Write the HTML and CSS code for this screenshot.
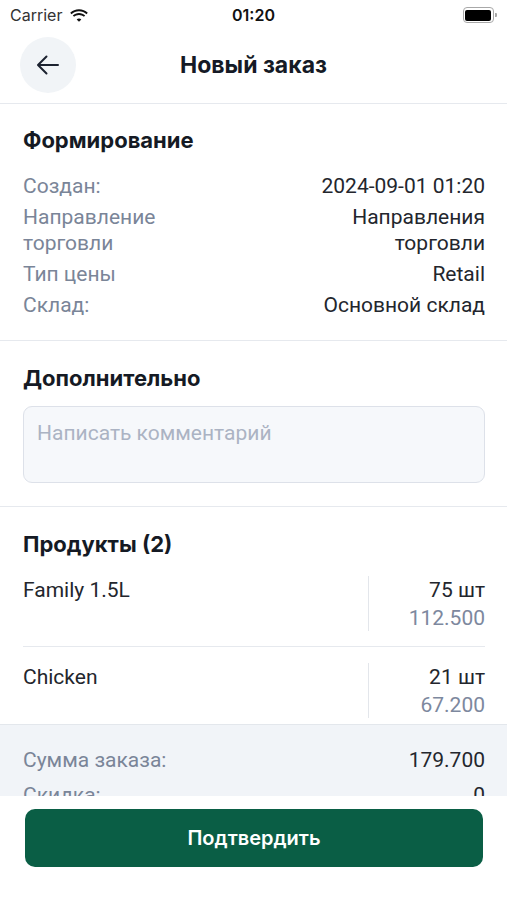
FILE: index.html
```html
<!DOCTYPE html>
<html>
<head>
    <meta charset="UTF-8">
    <meta name="viewport" content="width=device-width, initial-scale=1.0">
    <title>Новый заказ</title>
    <link rel="stylesheet" href="styles.css">
</head>
<body>
    <div class="screen">
        <!-- Status bar -->
        <div class="status-bar">
            <div class="status-left">
                <span>Carrier</span>
                <svg class="wifi" width="18" height="13" viewBox="0 0 18 13">
                    <path d="M9 2.2c2.9 0 5.5 1.1 7.5 3l1.3-1.4C15.5 1.6 12.4.3 9 .3S2.5 1.6.2 3.8l1.3 1.4c2-1.9 4.6-3 7.5-3z" fill="#111"/>
                    <path d="M9 5.9c1.9 0 3.6.7 4.9 1.9l1.3-1.4C13.6 4.9 11.4 4 9 4s-4.6.9-6.2 2.4l1.3 1.4C5.4 6.6 7.1 5.9 9 5.9z" fill="#111"/>
                    <path d="M9 9.5c.9 0 1.7.3 2.3.9L9 12.8 6.7 10.4c.6-.6 1.4-.9 2.3-.9z" fill="#111"/>
                </svg>
            </div>
            <div class="status-time">01:20</div>
            <div class="status-right">
                <div class="battery"><div class="battery-level"></div></div>
                <div class="battery-cap"></div>
            </div>
        </div>

        <!-- Header -->
        <div class="header">
            <button class="back-btn" aria-label="Назад">
                <svg width="26" height="26" viewBox="0 0 26 26">
                    <path d="M23 13H3.5M11.5 4.5L3 13l8.5 8.5" fill="none" stroke="#1c2230" stroke-width="2" stroke-linecap="round" stroke-linejoin="round"/>
                </svg>
            </button>
            <h1 class="header-title">Новый заказ</h1>
        </div>

        <div class="scroll">
            <!-- Формирование -->
            <div class="section">
                <h2 class="section-title">Формирование</h2>
                <div class="info-list">
                    <div class="info-row">
                        <div class="info-label">Создан:</div>
                        <div class="info-value">2024-09-01 01:20</div>
                    </div>
                    <div class="info-row">
                        <div class="info-label">Направление<br>торговли</div>
                        <div class="info-value">Направления<br>торговли</div>
                    </div>
                    <div class="info-row">
                        <div class="info-label">Тип цены</div>
                        <div class="info-value">Retail</div>
                    </div>
                    <div class="info-row">
                        <div class="info-label">Склад:</div>
                        <div class="info-value">Основной склад</div>
                    </div>
                </div>
            </div>

            <!-- Дополнительно -->
            <div class="section section-extra">
                <h2 class="section-title">Дополнительно</h2>
                <div class="comment-box">Написать комментарий</div>
            </div>

            <!-- Продукты -->
            <div class="section section-products">
                <h2 class="section-title">Продукты (2)</h2>
                <div class="product">
                    <div class="product-name">Family 1.5L</div>
                    <div class="product-side">
                        <div class="product-qty">75 шт</div>
                        <div class="product-price">112.500</div>
                    </div>
                </div>
                <div class="product">
                    <div class="product-name">Chicken</div>
                    <div class="product-side">
                        <div class="product-qty">21 шт</div>
                        <div class="product-price">67.200</div>
                    </div>
                </div>
            </div>

            <!-- Итого -->
            <div class="summary">
                <div class="summary-row">
                    <div class="info-label">Сумма заказа:</div>
                    <div class="info-value">179.700</div>
                </div>
                <div class="summary-row">
                    <div class="info-label">Скидка:</div>
                    <div class="info-value">0</div>
                </div>
            </div>
        </div>

        <div class="footer">
            <button class="confirm-btn">Подтвердить</button>
        </div>
    </div>
</body>
</html>
```

FILE: styles.css
```css
body {
    margin: 0;
    padding: 0;
    background-color: #ffffff;
    font-family: Roboto, "Noto Sans", sans-serif;
    color: #1f2430;
}

.screen {
    height: 900px;
    display: flex;
    flex-direction: column;
    overflow: hidden;
}

/* Status bar */
.status-bar {
    height: 30px;
    display: flex;
    align-items: center;
    justify-content: space-between;
    padding: 0 10px;
    font-family: Inter, sans-serif;
    font-size: 16px;
    color: #111;
}

.status-left {
    display: flex;
    align-items: center;
    gap: 8px;
    width: 120px;
    color: #333;
}

.status-time {
    font-weight: 600;
}

.status-right {
    width: 120px;
    display: flex;
    justify-content: flex-end;
    align-items: center;
}

.battery {
    width: 26px;
    height: 11px;
    border: 1.5px solid #a8a8a8;
    border-radius: 4px;
    padding: 1.5px;
    box-sizing: content-box;
}

.battery-level {
    width: 100%;
    height: 100%;
    background-color: #000;
    border-radius: 2px;
}

.battery-cap {
    width: 2px;
    height: 4px;
    background-color: #a8a8a8;
    border-radius: 0 1px 1px 0;
    margin-left: 1px;
}

/* Header */
.header {
    height: 74px;
    box-sizing: border-box;
    padding: 7px 20px 11px;
    display: flex;
    align-items: center;
    border-bottom: 1px solid #e6e9ee;
    position: relative;
}

.back-btn {
    width: 56px;
    height: 56px;
    border-radius: 50%;
    border: none;
    background-color: #f1f4f7;
    display: flex;
    align-items: center;
    justify-content: center;
    padding: 0;
    cursor: pointer;
}

.header-title {
    position: absolute;
    left: 0;
    right: 0;
    top: 21px;
    margin: 0;
    text-align: center;
    font-family: Inter, sans-serif;
    font-size: 23px;
    font-weight: 700;
    line-height: 28px;
    color: #151a26;
    pointer-events: none;
}

.scroll {
    flex: 1;
    overflow: hidden;
}

/* Sections */
.section {
    padding: 23px 22px 22px 23px;
    border-bottom: 1px solid #e6e9ee;
}

.section-title {
    margin: 0 0 20px;
    font-family: Inter, sans-serif;
    font-size: 22px;
    font-weight: 700;
    line-height: 26px;
    color: #151a24;
}

.info-list {
    display: flex;
    flex-direction: column;
    gap: 5px;
}

.info-row, .summary-row {
    display: flex;
    justify-content: space-between;
    align-items: flex-start;
    font-size: 21px;
    line-height: 26px;
}

.info-label {
    color: #7a8598;
}

.info-value {
    color: #23262d;
    text-align: right;
}

.section-extra {
    padding-top: 24px;
    padding-bottom: 23px;
}

.section-extra .section-title {
    margin-bottom: 15px;
}

.comment-box {
    height: 77px;
    box-sizing: border-box;
    border: 1px solid #dde1e9;
    border-radius: 9px;
    background-color: #f6f8fb;
    padding: 13px 13px;
    font-size: 21px;
    line-height: 26px;
    color: #abb3c3;
}

/* Products */
.section-products {
    padding-top: 24px;
    padding-bottom: 6px;
    border-bottom: none;
}

.section-products .section-title {
    margin-bottom: 19px;
}

.product {
    display: flex;
    justify-content: space-between;
    font-size: 21px;
    line-height: 26px;
    padding-bottom: 15px;
    margin-bottom: 16px;
    border-bottom: 1px solid #e6e9ee;
}

.product:last-child {
    border-bottom: none;
    margin-bottom: 0;
    padding-bottom: 0;
}

.product-name {
    padding-top: 1px;
    color: #23262d;
}

.product-side {
    width: 116px;
    border-left: 1px solid #e3e6eb;
    text-align: right;
    padding-top: 1px;
}

.product-qty {
    color: #23262d;
}

.product-price {
    margin-top: 2px;
    color: #7d889e;
}

/* Summary */
.summary {
    background-color: #f1f4f8;
    border-top: 1px solid #e3e7ec;
    padding: 22px 22px 20px 23px;
    display: flex;
    flex-direction: column;
    gap: 9px;
}

/* Footer */
.footer {
    height: 104px;
    box-sizing: border-box;
    padding: 13px 24px 0 25px;
    background-color: #ffffff;
}

.confirm-btn {
    width: 100%;
    height: 58px;
    border: none;
    border-radius: 10px;
    background-color: #0a5e45;
    color: #ffffff;
    font-family: Inter, sans-serif;
    font-size: 20px;
    font-weight: 600;
    cursor: pointer;
}
```
